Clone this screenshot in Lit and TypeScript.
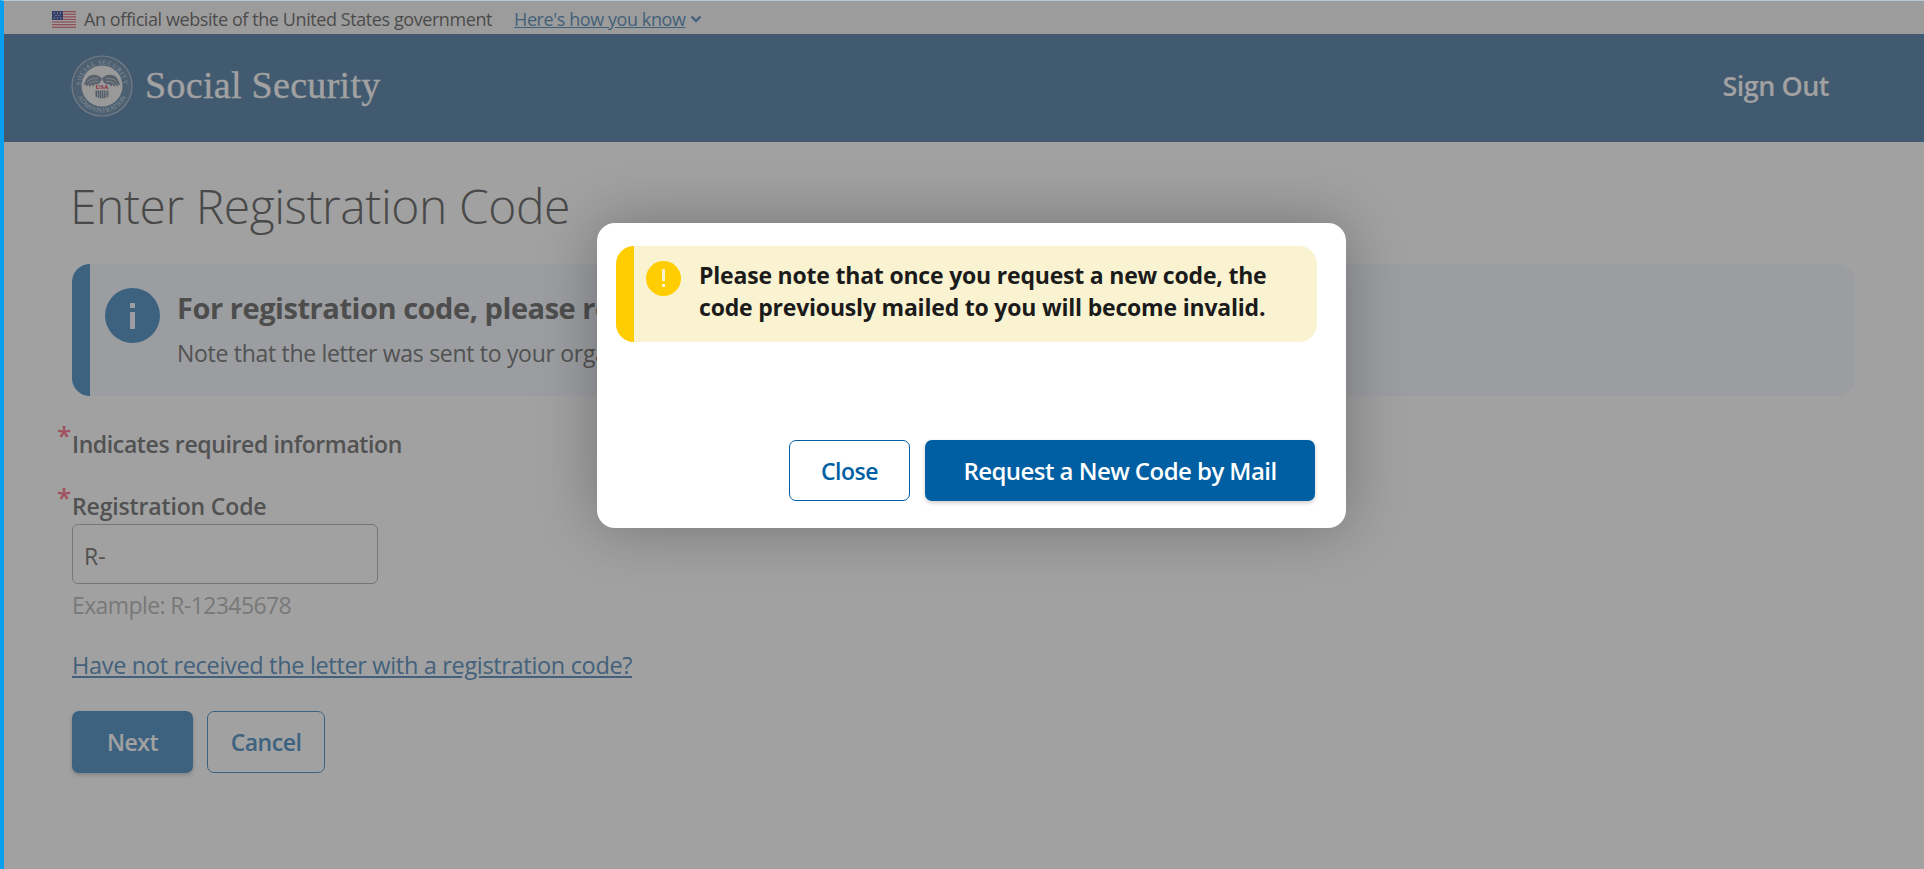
import { LitElement, html, css, svg } from "lit";
import { customElement } from "lit/decorators.js";

@customElement("app-root")
export class AppRoot extends LitElement {
  static styles = css`
    :host { display: block; position: relative; height: 869px; box-sizing: border-box; overflow: hidden;
      border-left: 4px solid #0a9eef; border-top: 1px solid #b9c9dc; background: #fff;
      font-family: "Open Sans", "Noto Sans", sans-serif; color: #828282; }
    .gov { height: 33px; box-sizing: border-box; display: flex; align-items: center; background: #f8f8f8; padding: 3px 0 0 48px; font-size: 18px; letter-spacing: -0.42px; color: #787878; }
    .flag { width: 24px; height: 17px; margin-right: 8px; display: block; }
    .gov a { margin-left: 22px; color: #6a98c0; text-decoration: underline; }
    .chev { margin-left: 5px; display: block; }
    .head { height: 108px; box-sizing: border-box; background: #698fb2; display: flex; align-items: center; justify-content: space-between; padding: 0 95px 6px 67px; color: #fff; }
    .brand { display: flex; align-items: center; gap: 12px; }
    .seal { width: 62px; height: 62px; display: block; margin-top: 2px; }
    .name { font-family: "Liberation Serif", "DejaVu Serif", serif; font-size: 38px; letter-spacing: 0.3px; -webkit-text-stroke: 0.3px #fff; }
    .out { font-size: 27px; font-weight: 600; letter-spacing: -0.5px; }
    main { padding: 0 69px 0 68px; }
    h1 { margin: 34px 0 0 -2px; font-size: 48px; line-height: 60px; font-weight: 300; letter-spacing: -0.45px; color: #747474; }
    .info { margin-top: 28px; height: 132px; box-sizing: border-box; display: flex; background: #f5f9fe; border-left: 18px solid #619ccb; border-radius: 18px; padding: 24px 0 0 15px; gap: 17px; }
    .i-ic { width: 55px; height: 55px; display: block; flex: none; }
    .info b { display: block; font-size: 29px; line-height: 40px; font-weight: 700; letter-spacing: -0.45px; color: #7a7a7a; }
    .info p { margin: 10px 0 0; font-size: 23px; line-height: 30px; letter-spacing: -0.3px; }
    .req { position: relative; font-weight: 600; font-size: 23px; line-height: 30px; letter-spacing: -0.38px; }
    .star { position: absolute; left: -15px; top: -9px; color: #ff7f98; font-size: 26px; font-weight: 600; }
    .note { margin-top: 33px; }
    .lab { margin-top: 32px; letter-spacing: -0.15px; }
    .inp { margin-top: 3px; width: 306px; height: 60px; box-sizing: border-box; border: 1px solid #bcbcbc; border-radius: 6px; display: flex; align-items: center; padding: 3px 0 0 11px; font-size: 23px; }
    .ex { margin-top: 6px; font-size: 23px; line-height: 30px; color: #c0c0c0; letter-spacing: -0.6px; }
    .lnk { display: block; margin-top: 29px; font-size: 23.5px; line-height: 32px; color: #6a9ac4; text-decoration: underline; letter-spacing: -0.33px; }
    .btns { display: flex; gap: 14px; margin-top: 30px; }
    .btn { height: 62px; box-sizing: border-box; border-radius: 7px; display: flex; align-items: center; justify-content: center; font-size: 23px; font-weight: 600; letter-spacing: -0.5px; }
    .next { width: 121px; background: #619ccb; color: #fff; box-shadow: 0 2px 4px rgba(0,0,0,.2); }
    .cancel { width: 118px; border: 1px solid #619ccb; color: #619ccb; }
    .veil { position: absolute; inset: 0; background: rgba(0,0,0,.37); }
    .modal { position: absolute; left: 593px; top: 222px; width: 749px; height: 305px; box-sizing: border-box; background: #fff; border-radius: 18px; padding: 23px 29px 0 19px; box-shadow: 0 0 60px rgba(0,0,0,.28); display: flex; flex-direction: column; }
    .warn { height: 96px; box-sizing: border-box; display: flex; background: #faf3d1; border-left: 18px solid #ffcd00; border-radius: 18px; padding: 13px 0 0 12px; gap: 18px; color: #1b1b1b; font-size: 23px; line-height: 32px; font-weight: 700; letter-spacing: -0.2px; }
    .w-ic { width: 35px; height: 35px; display: block; flex: none; margin-top: 2px; }
    .acts { margin-top: auto; margin-bottom: 27px; display: flex; justify-content: flex-end; gap: 15px; padding-right: 2px; }
    .close { width: 121px; height: 61px; border: 1px solid #005ea2; color: #005ea2; background: #fff; }
    .req-new { width: 390px; height: 61px; background: #005ea2; color: #fff; box-shadow: 0 2px 4px rgba(0,0,0,.2); font-size: 24px; letter-spacing: -0.55px; }
  `;

  private seal() {
    return svg`<svg class="seal" viewBox="0 0 62 62" aria-hidden="true">
      <defs>
        <path id="ta" d="M9.500 31a21.500 21.500 0 0 1 43 0"/>
        <path id="tb" d="M4.500 31a26.500 26.500 0 0 0 53 0"/>
      </defs>
      <circle cx="31" cy="31" r="30" fill="#7b98b4" stroke="#b4c4d2" stroke-width="1.200"/>
      <circle cx="31" cy="31" r="20.500" fill="#f2f2f2"/>
      <text font-family="Liberation Serif, serif" font-size="6.500" fill="#d7e2ec" letter-spacing=".6"><textPath href="#ta" startOffset="50%" text-anchor="middle">SOCIAL SECURITY</textPath></text>
      <text font-family="Liberation Serif, serif" font-size="6.500" fill="#d7e2ec" letter-spacing=".35"><textPath href="#tb" startOffset="50%" text-anchor="middle">ADMINISTRATION</textPath></text>
      <path d="M31 23.500c-2-3-8-5-12-3-3 1.500-5 5-6.500 10.500l2.500-2 .5 3 2-2.500 1 2.500 2-2.500 1.500 2 2-2.500 2 .5c3-1 4-3 5-6Z" fill="#8d9dad"/>
      <path d="M31 23.500c2-3 8-5 12-3 3 1.500 5 5 6.500 10.500l-2.500-2-.5 3-2-2.500-1 2.500-2-2.500-1.500 2-2-2.500-2 .5c-3-1-4-3-5-6Z" fill="#8d9dad"/>
      <path d="M16 27c3-3 6-4 11-3.500M18 29c3-2 5-3 9-2.500M46 27c-3-3-6-4-11-3.500M44 29c-3-2-5-3-9-2.500" fill="none" stroke="#f2f2f2" stroke-width=".6"/>
      <text x="31" y="34" text-anchor="middle" font-family="Liberation Serif, serif" font-weight="700" font-size="6.500" fill="#e2324a">USA</text>
      <path d="M24.500 35.500h13v6q-6.500 4-13 0Z" fill="#7f93a6"/>
      <path d="M26.500 35.500v8M28.500 35.500v9M30.500 35.500v9.500M32.500 35.500v9.500M34.500 35.500v9M36 35.500v8" stroke="#f2f2f2" stroke-width=".6"/>
    </svg>`;
  }

  private flag() {
    const stripes = [0, 1, 2, 3, 4, 5, 6].map((i) => svg`<rect y="${i * 2.6}" width="24" height="1.300" fill="#e07f8a"/>`);
    return svg`<svg class="flag" viewBox="0 0 24 17" aria-hidden="true">
      <rect width="24" height="17" fill="#fff"/>${stripes}
      <rect width="11" height="9" fill="#5566aa"/>
      <path d="M2 2h1M5 2h1M8 2h1M3.500 4.500h1M6.500 4.500h1M2 7h1M5 7h1M8 7h1" stroke="#fff" stroke-width="1"/>
    </svg>`;
  }

  render() {
    return html`
      <div class="gov">
        ${this.flag()}
        <span>An official website of the United States government</span>
        <a>Here's how you know</a>
        <svg class="chev" width="12" height="9" viewBox="0 0 12 9"><path d="M1.500 1.500 6 6 10.500 1.500" fill="none" stroke="#6a98c0" stroke-width="2.400"/></svg>
      </div>
      <header class="head">
        <div class="brand">${this.seal()}<span class="name">Social Security</span></div>
        <span class="out">Sign Out</span>
      </header>
      <main>
        <h1>Enter Registration Code</h1>
        <section class="info">
          <svg class="i-ic" viewBox="0 0 55 55" aria-hidden="true">
            <circle cx="27.500" cy="27.500" r="27.500" fill="#619ccb"/>
            <rect x="25" y="15" width="5" height="5" fill="#f5f9fe"/>
            <rect x="25" y="24" width="5" height="17" fill="#f5f9fe"/>
          </svg>
          <div>
            <b>For registration code, please refer to the letter mailed to you.</b>
            <p>Note that the letter was sent to your organization's address on file.</p>
          </div>
        </section>
        <div class="req note"><span class="star">*</span>Indicates required information</div>
        <div class="req lab"><span class="star">*</span>Registration Code</div>
        <div class="inp">R-</div>
        <div class="ex">Example: R-12345678</div>
        <a class="lnk">Have not received the letter with a registration code?</a>
        <div class="btns">
          <div class="btn next">Next</div>
          <div class="btn cancel">Cancel</div>
        </div>
      </main>
      <div class="veil"></div>
      <div class="modal">
        <div class="warn">
          <svg class="w-ic" viewBox="0 0 35 35" aria-hidden="true">
            <circle cx="17.500" cy="17.500" r="17.500" fill="#ffcd00"/>
            <rect x="16" y="8" width="3" height="12" fill="#faf3d1"/>
            <rect x="16" y="23" width="3" height="3" fill="#faf3d1"/>
          </svg>
          <div>Please note that once you request a new code, the<br />code previously mailed to you will become invalid.</div>
        </div>
        <div class="acts">
          <div class="btn close">Close</div>
          <div class="btn req-new">Request a New Code by Mail</div>
        </div>
      </div>
    `;
  }
}
